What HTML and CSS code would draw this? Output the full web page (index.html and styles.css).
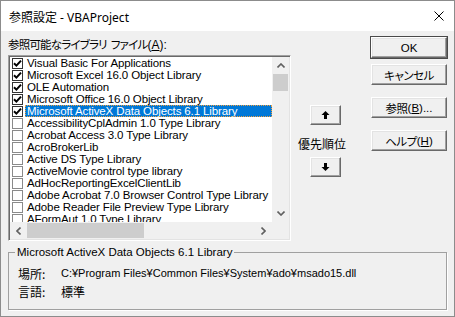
FILE: index.html
```html
<!DOCTYPE html>
<html lang="ja">
<head>
<meta charset="utf-8">
<title>参照設定 - VBAProject</title>
<link rel="stylesheet" href="styles.css">
</head>
<body>
<div class="window">
  <div class="titlebar">
    <span class="title">参照設定 - VBAProject</span>
    <svg class="close" width="10" height="10" viewBox="0 0 10 10"><path d="M0.5 0.5L9.5 9.5M9.5 0.5L0.5 9.5" stroke="#000" stroke-width="1" fill="none"/></svg>
  </div>
  <div class="body">
    <div class="top">
      <div class="libcol">
        <div class="label"><span class="ja">参照可能なライブラリ</span><span class="sp"> </span><span class="ja">ファイル</span>(<u>A</u>):</div>
        <div class="listbox">
          <div class="list-main">
            <ul class="rows">
              <li class="row"><span class="cb on"><svg width="9" height="9" viewBox="0 0 9 9"><path d="M1 4.2L3.4 6.6L8 1.6" stroke="#000" stroke-width="2" fill="none"/></svg></span><span class="txt">Visual Basic For Applications</span></li>
              <li class="row"><span class="cb on"><svg width="9" height="9" viewBox="0 0 9 9"><path d="M1 4.2L3.4 6.6L8 1.6" stroke="#000" stroke-width="2" fill="none"/></svg></span><span class="txt">Microsoft Excel 16.0 Object Library</span></li>
              <li class="row"><span class="cb on"><svg width="9" height="9" viewBox="0 0 9 9"><path d="M1 4.2L3.4 6.6L8 1.6" stroke="#000" stroke-width="2" fill="none"/></svg></span><span class="txt">OLE Automation</span></li>
              <li class="row"><span class="cb on"><svg width="9" height="9" viewBox="0 0 9 9"><path d="M1 4.2L3.4 6.6L8 1.6" stroke="#000" stroke-width="2" fill="none"/></svg></span><span class="txt">Microsoft Office 16.0 Object Library</span></li>
              <li class="row selected"><span class="cb on"><svg width="9" height="9" viewBox="0 0 9 9"><path d="M1 4.2L3.4 6.6L8 1.6" stroke="#000" stroke-width="2" fill="none"/></svg></span><span class="txt">Microsoft ActiveX Data Objects 6.1 Library</span></li>
              <li class="row"><span class="cb"></span><span class="txt">AccessibilityCplAdmin 1.0 Type Library</span></li>
              <li class="row"><span class="cb"></span><span class="txt">Acrobat Access 3.0 Type Library</span></li>
              <li class="row"><span class="cb"></span><span class="txt">AcroBrokerLib</span></li>
              <li class="row"><span class="cb"></span><span class="txt">Active DS Type Library</span></li>
              <li class="row"><span class="cb"></span><span class="txt">ActiveMovie control type library</span></li>
              <li class="row"><span class="cb"></span><span class="txt">AdHocReportingExcelClientLib</span></li>
              <li class="row"><span class="cb"></span><span class="txt">Adobe Acrobat 7.0 Browser Control Type Library</span></li>
              <li class="row"><span class="cb"></span><span class="txt">Adobe Reader File Preview Type Library</span></li>
              <li class="row"><span class="cb"></span><span class="txt">AFormAut 1.0 Type Library</span></li>
            </ul>
            <div class="vscroll">
              <div class="sb-btn"><svg width="8" height="5" viewBox="0 0 8 5"><path d="M0.5 4.5L4 1L7.5 4.5" stroke="#606060" stroke-width="1.6" fill="none"/></svg></div>
              <div class="vtrack"><div class="vthumb"></div></div>
              <div class="sb-btn"><svg width="8" height="5" viewBox="0 0 8 5"><path d="M0.5 0.5L4 4L7.5 0.5" stroke="#606060" stroke-width="1.6" fill="none"/></svg></div>
            </div>
          </div>
          <div class="hscroll">
            <div class="sb-btn"><svg width="5" height="8" viewBox="0 0 5 8"><path d="M4.5 0.5L1 4L4.5 7.5" stroke="#606060" stroke-width="1.6" fill="none"/></svg></div>
            <div class="htrack"><div class="hthumb"></div></div>
            <div class="sb-btn"><svg width="5" height="8" viewBox="0 0 5 8"><path d="M0.5 0.5L4 4L0.5 7.5" stroke="#606060" stroke-width="1.6" fill="none"/></svg></div>
            <div class="corner"></div>
          </div>
        </div>
      </div>
      <div class="priority">
        <button class="btn arrow-btn" type="button"><svg width="9" height="8" viewBox="0 0 9 8"><path d="M4.5 0L8.5 4H6V8H3V4H0.5Z" fill="#000"/></svg></button>
        <div class="prio-label">優先順位</div>
        <button class="btn arrow-btn" type="button"><svg width="9" height="8" viewBox="0 0 9 8"><path d="M4.5 8L8.5 4H6V0H3V4H0.5Z" fill="#000"/></svg></button>
      </div>
      <div class="actions">
        <button class="btn action default" type="button">OK</button>
        <button class="btn action" type="button"><span class="ja">キャンセル</span></button>
        <button class="btn action gap" type="button"><span class="ja">参照</span>(<u>B</u>)...</button>
        <button class="btn action gap" type="button"><span class="ja">ヘルプ</span>(<u>H</u>)</button>
      </div>
    </div>
    <fieldset class="details">
      <legend>Microsoft ActiveX Data Objects 6.1 Library</legend>
      <div class="info">
        <span class="key ja">場所:</span><span class="val path">C:¥Program Files¥Common Files¥System¥ado¥msado15.dll</span>
        <span class="key ja">言語:</span><span class="val ja">標準</span>
      </div>
    </fieldset>
  </div>
</div>
</body>
</html>
```
FILE: styles.css
```css
* { box-sizing: border-box; }
html, body { margin: 0; padding: 0; }
body {
  font-family: "Liberation Sans", "Noto Sans CJK JP", sans-serif;
  font-size: 12px;
  color: #000;
  background: #f0f0f0;
}
.ja {
  font-family: "Noto Sans CJK JP", sans-serif;
  font-feature-settings: "palt" 1;
}
.window {
  width: 455px;
  height: 317px;
  border: 1px solid #8c8c8c;
  background: #f0f0f0;
  display: flex;
  flex-direction: column;
}
.titlebar {
  height: 30px;
  background: #fff;
  display: flex;
  align-items: center;
  justify-content: space-between;
  padding: 0 10px 0 8px;
  flex: none;
}
.title {
  font-family: "Noto Sans", "Noto Sans CJK JP", sans-serif;
  font-size: 12px;
  color: #000;
  padding-top: 1px;
}
.close { display: block; }
.body {
  padding: 0 7px 0 7px;
  flex: 1;
  display: flex;
  flex-direction: column;
}
.top { display: flex; }
.libcol { width: 283px; flex: none; }
.label {
  margin-top: 5px;
  line-height: 16px;
  height: 16px;
  white-space: pre;
}
.label .ja { font-size: 11.5px; letter-spacing: -0.8px; }
.label .sp { display: inline-block; width: 4px; }
u { text-decoration: underline; text-underline-offset: 1px; }
.listbox {
  margin-top: 3px;
  border: 1px solid;
  border-color: #a0a0a0 #fff #fff #a0a0a0;
  padding: 1px;
  box-shadow: inset 1px 1px 0 #696969, inset -1px -1px 0 #e3e3e3;
  background: #f0f0f0;
}
.list-main { display: flex; height: 165px; }
.rows {
  list-style: none;
  margin: 0;
  padding: 0;
  width: 262px;
  background: #fff;
  overflow: hidden;
}
.row {
  display: flex;
  align-items: center;
  height: 12px;
  white-space: nowrap;
}
.cb {
  flex: none;
  width: 11px;
  height: 11px;
  margin-left: 2px;
  border: 1px solid #8a8a8a;
  background: #fff;
  display: flex;
  align-items: center;
  justify-content: center;
}
.cb.on { border-color: #333; }
.cb svg { display: block; }
.txt {
  margin-left: 2px;
  padding: 0 2px;
  font-size: 11.5px;
  letter-spacing: -0.12px;
  line-height: 12px;
  height: 12px;
}
.selected .txt {
  flex: 1;
  background: #0078d7;
  color: #fff;
  outline: 1px dotted #f0a040;
  outline-offset: -1px;
}
.vscroll {
  width: 17px;
  flex: none;
  display: flex;
  flex-direction: column;
  background: #f0f0f0;
}
.sb-btn {
  width: 17px;
  height: 17px;
  flex: none;
  display: flex;
  align-items: center;
  justify-content: center;
}
.sb-btn svg { display: block; }
.vtrack { flex: 1; }
.vthumb { height: 17px; margin: 0 1px; background: #cdcdcd; }
.hscroll { display: flex; height: 17px; background: #f0f0f0; }
.htrack { flex: 1; display: flex; align-items: stretch; padding: 1px 0; }
.hthumb { width: 117px; background: #cdcdcd; }
.corner { width: 17px; flex: none; }
.priority {
  flex: 1;
  padding: 74px 0 0 7px;
  display: flex;
  flex-direction: column;
  align-items: flex-start;
}
.btn {
  font: inherit;
  color: #000;
  background: #f0f0f0;
  border: 1px solid;
  border-color: #fff #696969 #696969 #fff;
  box-shadow: inset -1px -1px 0 #a0a0a0, inset 1px 1px 0 #e3e3e3;
  padding: 0;
  margin: 0;
  display: flex;
  align-items: center;
  justify-content: center;
  white-space: nowrap;
}
.arrow-btn {
  width: 31px;
  height: 20px;
  margin-left: 12px;
}
.arrow-btn svg { display: block; }
.prio-label {
  margin: 11px 0 5px;
  line-height: 16px;
  font-family: "Noto Sans CJK JP", sans-serif;
  font-size: 12px;
}
.actions {
  width: 76px;
  flex: none;
  padding-top: 6px;
  display: flex;
  flex-direction: column;
}
.action {
  width: 76px;
  height: 21px;
  line-height: 14px;
  margin-bottom: 6px;
  font-size: 11.5px;
}
.action .ja { font-size: 11.5px; letter-spacing: -0.5px; }
.action.gap { margin-top: 6px; }
.action.default {
  outline: 1px solid #4a4a4a;
  outline-offset: 0;
}
.details {
  margin: 4px 0 0 0;
  padding: 5px 9px 0 9px;
  border: 1px solid #a0a0a0;
  box-shadow: 1px 1px 0 #fff;
  height: 65px;
  min-width: 0;
}
.details legend {
  padding: 0 2px;
  margin-left: -3px;
  line-height: 14px;
  font-size: 11.5px;
}
.info {
  display: grid;
  grid-template-columns: 43px auto;
  grid-auto-rows: 18px;
  align-items: center;
}
.key { white-space: nowrap; font-size: 12px; }
.val { white-space: nowrap; }
.path { font-size: 11px; }
.val.ja { font-size: 12px; }
```
